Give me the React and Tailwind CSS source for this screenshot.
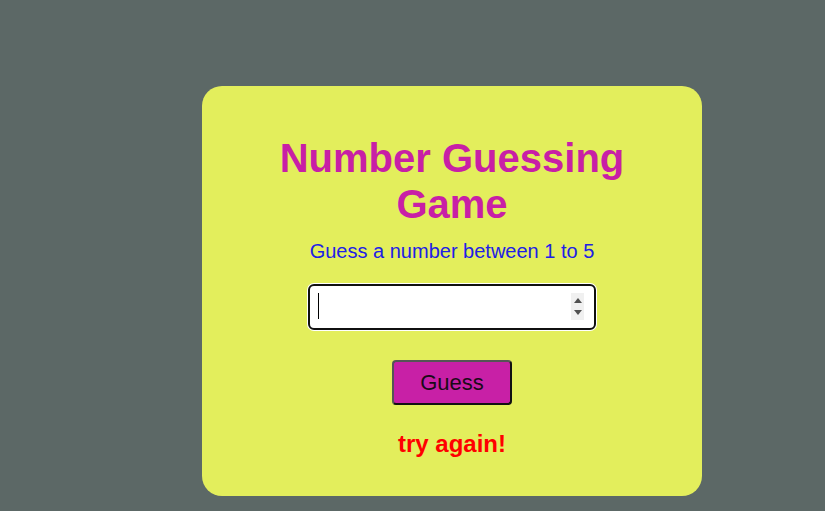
import React from "react";

export default function App() {
  return (
    <div className="min-h-[511px] w-full bg-[#5c6866] pt-[86px] pl-[202px]" style={{ fontFamily: '"Liberation Sans", Arial, sans-serif' }}>
      <div className="flex h-[410px] w-[500px] flex-col items-center rounded-[20px] bg-[#e3ee5c] pt-[49px]">
        <h1 className="w-[400px] text-center text-[40px] font-bold leading-[46px] text-[#c81fa6]">
          Number Guessing Game
        </h1>
        <p className="mt-[13px] text-center text-[20px] leading-[23px] text-[#2020e6]">
          Guess a number between 1 to 5
        </p>
        <div className="relative mt-[21px] h-[46px] w-[288px]">
          <input
            type="number"
            className="block h-[46px] w-[288px] appearance-none rounded-[6px] border-2 border-[#101010] bg-white px-[8px] text-[20px] text-black shadow-[0_0_0_1px_#ffffff] outline-none [&::-webkit-inner-spin-button]:appearance-none [&::-webkit-outer-spin-button]:appearance-none"
          />
          <div className="pointer-events-none absolute left-[10px] top-[9px] h-[26px] w-px bg-black" />
          <div className="pointer-events-none absolute left-[263px] top-[9px] flex h-[27px] w-[13px] flex-col items-center justify-center gap-[7px] bg-[#f0f0f0]">
            <svg className="block shrink-0" width="8" height="5" viewBox="0 0 8 5"><path d="M4 0L8 5H0Z" fill="#505050" /></svg>
            <svg className="block shrink-0" width="8" height="5" viewBox="0 0 8 5"><path d="M0 0H8L4 5Z" fill="#505050" /></svg>
          </div>
        </div>
        <button className="mt-[30px] h-[45px] w-[120px] rounded-[4px] border-2 border-t-[#555555] border-l-[#555555] border-b-[#111111] border-r-[#111111] bg-[#c820a6] text-[22px] leading-[25px] text-[#1a0a18]">
          Guess
        </button>
        <p className="mt-[25px] text-center text-[24px] font-bold leading-[28px] text-[#ff0000]">
          try again!
        </p>
      </div>
    </div>
  );
}
